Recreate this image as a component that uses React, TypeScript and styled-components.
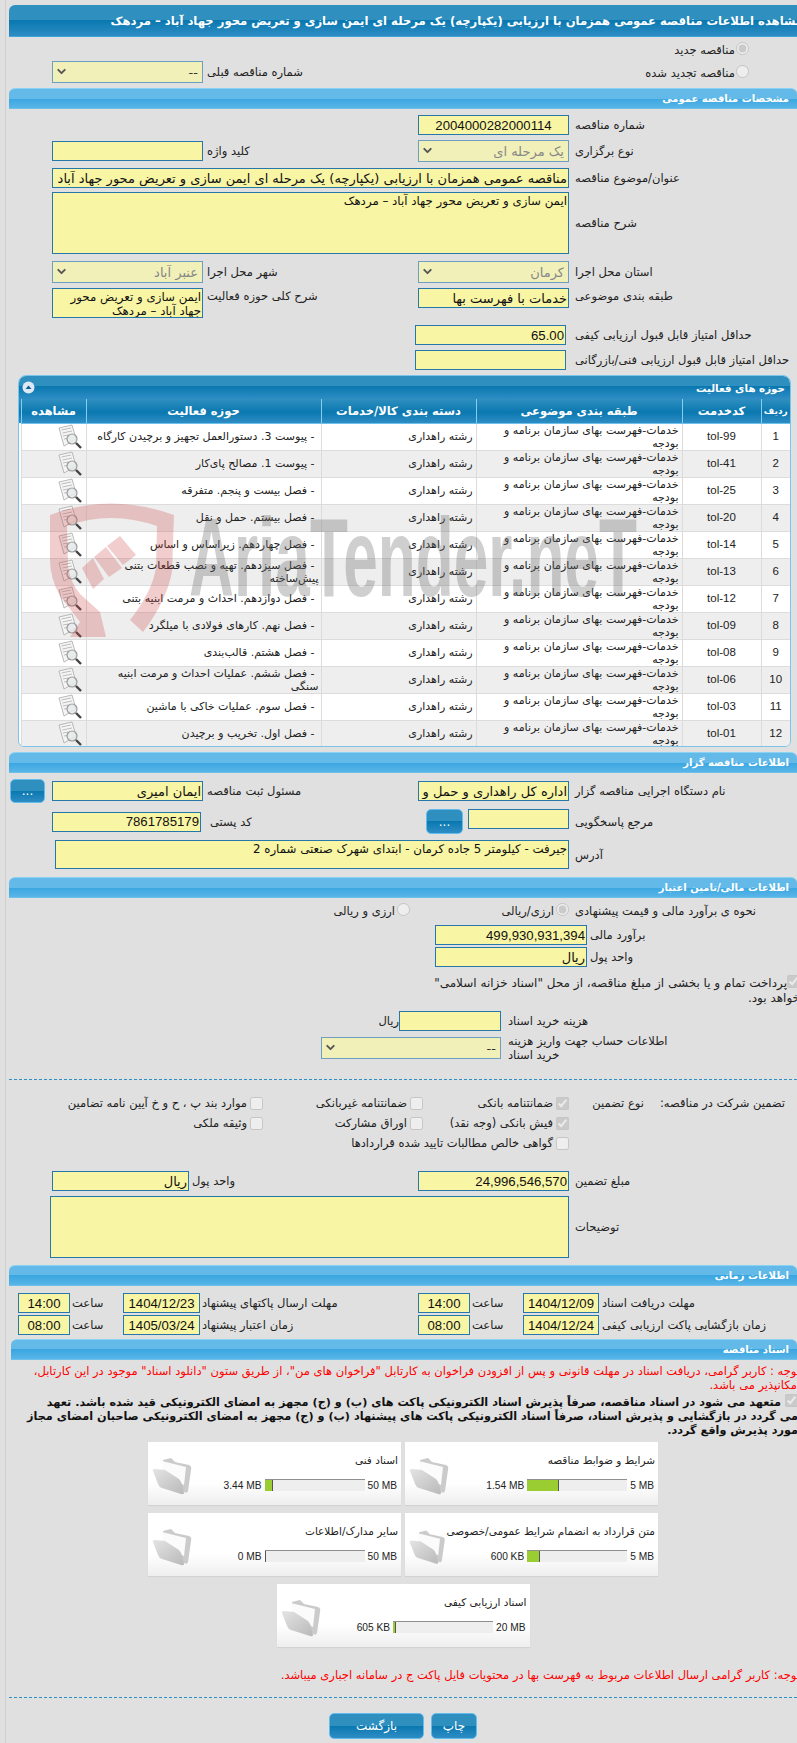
import React from "react";
import styled, { createGlobalStyle, css } from "styled-components";
import { ChevronDown } from "lucide-react";

const GlobalStyle = createGlobalStyle`
  html, body {
    margin: 0;
    padding: 0;
    background: #e0e0e0;
  }
  body {
    font-family: "DejaVu Sans", "Liberation Sans", sans-serif;
    font-size: 11.5px;
    color: #222;
  }
`;

const LATIN = `"Liberation Sans", "DejaVu Sans", sans-serif`;

const Page = styled.div`
  position: relative;
  width: 797px;
  height: 1743px;
  overflow: hidden;
  box-sizing: border-box;
  padding: 5px 0 0 9px;
  background: #e0e0e0;
  &::before {
    content: "";
    position: absolute;
    left: 5px;
    top: 0;
    bottom: 0;
    width: 1px;
    background: #cfcfcf;
  }
`;

const TitleBar = styled.div`
  height: 32px;
  box-sizing: border-box;
  border-radius: 6px 0 0 0;
  border-bottom: 1px solid #41a3dc;
  background: linear-gradient(#2f8fbf 0, #2f8fbf 50%, #0a78b0 50%, #2e8dc4 100%);
  color: #fff;
  font-weight: bold;
  font-size: 11.6px;
  line-height: 32px;
  white-space: nowrap;
  overflow: hidden;
`;

const TitleText = styled.span`
  display: inline-block;
  margin-right: -6px;
`;

const SectionBar = styled.div<{ $top?: number; $inset?: number }>`
  height: 21px;
  box-sizing: border-box;
  margin-top: ${(p) => p.$top ?? 5}px;
  margin-left: ${(p) => p.$inset ?? 0}px;
  padding-right: 8px;
  border-radius: 6px 6px 0 0;
  border-top: 1px solid #8ad2f3;
  border-bottom: 1px solid #6cc0ea;
  background: linear-gradient(#63b9e8 0, #63b9e8 50%, #3aa6e0 50%, #58b5e8 100%);
  color: #fff;
  font-weight: bold;
  font-size: 10px;
  line-height: 19px;
`;

const FormRow = styled.div<{ $cols?: string; $top?: number; $h?: number; $align?: string }>`
  display: grid;
  grid-template-columns: ${(p) => p.$cols ?? "228px 151px 215px 151px 43px"};
  margin-top: ${(p) => p.$top ?? 5}px;
  height: ${(p) => p.$h ?? 20}px;
  align-items: ${(p) => p.$align ?? "center"};
`;

const FieldLabel = styled.label<{ $pad?: number }>`
  display: block;
  text-align: left;
  padding-left: ${(p) => p.$pad ?? 6}px;
  line-height: 14px;
  white-space: nowrap;
`;

const TopLabel = styled(FieldLabel)`
  padding-top: 1px;
`;

const fieldBase = css`
  display: block;
  box-sizing: border-box;
  margin: 0;
  padding: 0 1px;
  background: #f8f5a4;
  border: 1px solid #2678ab;
  color: #111;
  outline: none;
  font-family: "DejaVu Sans", "Liberation Sans", sans-serif;
  font-size: 13px;
`;

const TextField = styled.input<{ $digits?: boolean; $center?: boolean; $shift?: number; $self?: string; $span?: boolean }>`
  ${fieldBase}
  width: 100%;
  height: 20px;
  ${(p) => p.$digits && `font-family: ${LATIN}; font-size: 13.2px;`}
  ${(p) => p.$center && "text-align: center;"}
  ${(p) => p.$shift && `margin-right: ${p.$shift}px;`}
  ${(p) => p.$self && `align-self: ${p.$self};`}
  ${(p) => p.$span && "grid-column: 2 / 5;"}
`;

const TextBox = styled.textarea<{ $h: number; $wide?: boolean; $gap?: number }>`
  ${fieldBase}
  font-size: 11.8px;
  height: ${(p) => p.$h}px;
  width: calc(100% - ${(p) => p.$gap ?? 0}px);
  resize: none;
  overflow: hidden;
  line-height: 14px;
  padding-top: 1px;
  ${(p) => p.$wide && "grid-column: 2 / 5;"}
`;

const SelectWrap = styled.div`
  position: relative;
  width: 100%;
  height: 22px;
`;

const SelectInput = styled.select<{ $muted?: boolean }>`
  ${fieldBase}
  width: 100%;
  height: 22px;
  appearance: none;
  opacity: 1;
  padding-right: 4px;
  background: #f1f0b8;
  border-color: #6e9fc0;
  color: ${(p) => (p.$muted ? "#888" : "#333")};
`;

const SelectArrow = styled(ChevronDown)`
  position: absolute;
  left: 3px;
  top: 4px;
  color: #555;
  pointer-events: none;
`;

const Select = ({ value, muted }: { value: string; muted?: boolean }) => (
  <SelectWrap>
    <SelectInput disabled $muted={muted} value={value} onChange={() => undefined}>
      <option>{value}</option>
    </SelectInput>
    <SelectArrow size={13} strokeWidth={3.5} />
  </SelectWrap>
);

const RadioLabel = styled.div`
  display: flex;
  align-items: center;
  gap: 1px;
  padding: 2px 48px 0 0;
  white-space: nowrap;
`;

const RadioInput = styled.input`
  margin: 0;
  width: 13px;
  height: 13px;
  position: relative;
  top: -2px;
`;

const RadioGroup = styled.div`
  grid-column: 2 / 6;
  display: flex;
  align-items: center;
`;

const RadioOption = styled.span<{ $w?: number }>`
  display: flex;
  align-items: center;
  gap: 2px;
  ${(p) => p.$w && `width: ${p.$w}px;`}
`;

const Panel = styled.div`
  margin: 5px 6px 0 9px;
  box-sizing: border-box;
  height: 372px;
  border: 1px solid #7cc5ea;
  border-radius: 8px 8px 6px 6px;
  background: #fff;
  overflow: hidden;
`;

const PanelHead = styled.div`
  display: flex;
  align-items: center;
  justify-content: space-between;
  height: 23px;
  padding: 0 5px 0 3px;
  background: linear-gradient(#2f8fbf 0, #2f8fbf 45%, #0a78b0 45%, #2e8dc4 100%);
  color: #fff;
  font-weight: bold;
  font-size: 10.3px;
`;

const CollapseDot = styled.svg`
  display: block;
`;

const TableWrap = styled.div`
  padding: 0 0 0 3px;
  background: linear-gradient(#2f8fbf 0, #0a78b0 55%, #2e8dc4 100%) top / 100% 24px no-repeat;
`;

const Grid = styled.table`
  width: 769px;
  table-layout: fixed;
  border-collapse: collapse;
`;

const HeadCell = styled.th<{ $w: number; $size?: number }>`
  width: ${(p) => p.$w}px;
  height: 24px;
  box-sizing: border-box;
  padding: 0;
  border-left: 1px solid #86cdf0;
  border-bottom: 1px solid #6cc0ea;
  color: #fff;
  font-size: ${(p) => p.$size ?? 11.5}px;
  font-weight: bold;
  text-align: center;
  white-space: nowrap;
`;

const GridRow = styled.tr<{ $odd: boolean }>`
  background: ${(p) => (p.$odd ? "#fff" : "#eeeeee")};
`;

const Cell = styled.td<{ $align?: string; $digits?: boolean }>`
  height: 27px;
  box-sizing: border-box;
  padding: 0 3px;
  border-left: 1px solid #dcdcdc;
  border-bottom: 1px solid #dcdcdc;
  line-height: 13px;
  font-size: 11px;
  text-align: ${(p) => p.$align ?? "right"};
  ${(p) => p.$digits && `font-family: ${LATIN}; font-size: 11.5px;`}
`;

const ActivityCell = styled(Cell)`
  padding-right: 2px;
  text-indent: 4px;
  white-space: pre-line;
`;

const Watermark = styled.div`
  position: absolute;
  left: 50px;
  top: 500px;
  width: 610px;
  height: 140px;
  direction: ltr;
  pointer-events: none;
`;

const WatermarkText = styled.span`
  position: absolute;
  left: 139px;
  top: 2px;
  font-family: "Liberation Sans", sans-serif;
  font-weight: bold;
  font-size: 112px;
  line-height: 112px;
  white-space: nowrap;
  color: rgba(105, 105, 105, 0.32);
  transform: scaleX(0.555);
  transform-origin: left top;
`;

const CheckNote = styled.div`
  margin: 8px -3px 0 0;
  font-size: 12px;
  line-height: 15px;
  white-space: nowrap;
`;

const CheckInput = styled.input`
  margin: 0;
  width: 13px;
  height: 13px;
  vertical-align: -1px;
`;

const Dashed = styled.div<{ $top: number }>`
  margin-top: ${(p) => p.$top}px;
  border-top: 1px dashed #2e8fc6;
`;

const GuaranteeGrid = styled.div`
  display: grid;
  grid-template-columns: 228px 146px 160px 1fr;
  grid-auto-rows: 20px;
  margin-top: 13px;
  align-items: center;
`;

const GuaranteeHead = styled.div`
  display: flex;
  padding-right: 12px;
  gap: 16px;
  white-space: nowrap;
`;

const CheckItem = styled.label<{ $col: number; $span?: number }>`
  grid-column: ${(p) => p.$col} / span ${(p) => p.$span ?? 1};
  display: flex;
  align-items: center;
  gap: 3px;
  white-space: nowrap;
`;

const RedNote = styled.div<{ $top: number }>`
  margin: ${(p) => p.$top}px -3px 0 0;
  color: #f00;
  line-height: 14px;
  white-space: nowrap;
`;

const BoldNote = styled.div`
  margin: 2px -1px 0 0;
  color: #111;
  font-weight: bold;
  font-size: 11.25px;
  line-height: 14px;
  white-space: nowrap;
`;

const CardList = styled.div`
  display: flex;
  flex-wrap: wrap;
  justify-content: center;
  gap: 8px 4px;
  width: 510px;
  margin: 4px auto 0;
`;

const Card = styled.div`
  display: flex;
  width: 253px;
  height: 63px;
  box-sizing: border-box;
  padding: 0 3px;
  background: linear-gradient(#fff 0, #fff 65%, #eeeeee 100%);
  box-shadow: 0 1px 1px #d2d2d2;
`;

const CardBody = styled.div`
  flex: 1;
  display: flex;
  flex-direction: column;
`;

const CardTitle = styled.div`
  margin-top: 11px;
  height: 14px;
  line-height: 14px;
  font-size: 10.5px;
  white-space: nowrap;
`;

const Meter = styled.div`
  direction: ltr;
  display: flex;
  justify-content: flex-end;
  align-items: center;
  gap: 3px;
  margin-top: 12px;
  padding-right: 1px;
  font-family: ${LATIN};
  font-size: 10.2px;
  color: #222;
  white-space: nowrap;
`;

const MeterTrack = styled.div`
  width: 100px;
  height: 12px;
  box-sizing: border-box;
  border-top: 1px solid #8f8f8f;
  background: #eeeeee;
`;

const MeterFill = styled.div`
  height: 100%;
  background: #9acd32;
  border-right: 1px solid #555;
  box-sizing: border-box;
`;

const ButtonRow = styled.div`
  display: flex;
  justify-content: center;
  gap: 7px;
  margin-top: 15px;
`;

const ActionButton = styled.button<{ $w: number; $h?: number; $end?: boolean }>`
  width: ${(p) => p.$w}px;
  height: ${(p) => p.$h ?? 26}px;
  box-sizing: border-box;
  padding: 0;
  border: 1px solid #62bcec;
  border-radius: 5px;
  background: linear-gradient(#2f8fbf 0, #2f8fbf 50%, #0a78b0 50%, #2e8dc4 100%);
  color: #fff;
  font-family: "DejaVu Sans", sans-serif;
  font-size: 12px;
  line-height: 1;
  ${(p) => p.$end && "justify-self: end; margin-left: 1px;"}
`;

const FolderGlyph = styled.svg`
  align-self: center;
  margin-top: 4px;
`;

const FolderIcon = () => (
  <FolderGlyph width="42" height="38" viewBox="0 0 42 38">
    <defs>
      <linearGradient id="folderFront" x1="0" y1="0" x2="1" y2="1">
        <stop offset="0" stopColor="#e4e4e4" />
        <stop offset="1" stopColor="#b9b9b9" />
      </linearGradient>
    </defs>
    <path d="M12 3 L20 1 L24 5 L38 8 Q41 9 40 13 L37 34 Q36 37 33 35 L12 22 Z" fill="#cbcbcb" />
    <path d="M11 4 L35 10 L33 28 L13 18 Z" fill="#fbfbfb" />
    <path d="M2 14 Q1 12 4 12 L14 13 L28 22 Q30 24 31 28 L33 36 Q33 38 30 37 L11 31 Q8 30 7 27 Z" fill="url(#folderFront)" />
  </FolderGlyph>
);

const ViewGlyph = styled.svg`
  display: block;
`;

const ViewIcon = () => (
  <ViewGlyph width="26" height="25" viewBox="0 0 26 25">
    <path d="M2 4 L15 1 L19 15 L7 22 Z" fill="#f5f5f5" stroke="#a8a8a8" strokeWidth="0.8" />
    <path d="M4.5 6 L14 4 M5.5 9 L15 7 M6 12 L11 11 M7 15 L10 14.5" stroke="#b5b5b5" strokeWidth="0.9" />
    <circle cx="15" cy="15" r="5" fill="#e6eaea" fillOpacity="0.8" stroke="#9a9a9a" strokeWidth="1.2" />
    <path d="M19 19 L24 24" stroke="#444" strokeWidth="2.4" />
  </ViewGlyph>
);

const LogoGlyph = styled.svg`
  position: absolute;
  left: 0;
  top: 0;
`;

const LogoMark = () => (
  <LogoGlyph width="130" height="140" viewBox="0 0 130 140">
    <g fill="rgba(205, 70, 70, 0.27)">
      <path d="M0 15 Q60 -8 124 15 L122 72 Q116 102 93 132 L80 120 Q102 92 106 68 L107 26 Q60 10 17 26 L18 66 Q20 82 30 94 L50 112 L56 137 L20 137 L30 122 L10 96 Q0 78 0 60 Z" />
      <path d="M57 46 L70 36 L86 55 L73 65 Z" />
      <path d="M44 57 L56 47 L72 68 L59 77 Z" />
      <path d="M32 68 L43 58 L54 79 L43 89 Z" />
    </g>
  </LogoGlyph>
);

const services = [
  ["tol-99", "- پیوست 3. دستورالعمل تجهیز و برچیدن کارگاه"],
  ["tol-41", "- پیوست 1. مصالح پای‌کار"],
  ["tol-25", "- فصل بیست و پنجم. متفرقه"],
  ["tol-20", "- فصل بیستم. حمل و نقل"],
  ["tol-14", "- فصل چهاردهم. زیراساس و اساس"],
  ["tol-13", "- فصل سیزدهم. تهیه و نصب قطعات بتنی\nپیش‌ساخته"],
  ["tol-12", "- فصل دوازدهم. احداث و مرمت ابنیه بتنی"],
  ["tol-09", "- فصل نهم. کارهای فولادی با میلگرد"],
  ["tol-08", "- فصل هشتم. قالب‌بندی"],
  ["tol-06", "- فصل ششم. عملیات احداث و مرمت ابنیه\nسنگی"],
  ["tol-03", "- فصل سوم. عملیات خاکی با ماشین"],
  ["tol-01", "- فصل اول. تخریب و برچیدن"],
];

const documents = [
  { title: "شرایط و ضوابط مناقصه", used: "1.54 MB", limit: "5 MB", fill: 32 },
  { title: "اسناد فنی", used: "3.44 MB", limit: "50 MB", fill: 8 },
  { title: "متن قرارداد به انضمام شرایط عمومی/خصوصی", used: "600 KB", limit: "5 MB", fill: 13 },
  { title: "سایر مدارک/اطلاعات", used: "0 MB", limit: "50 MB", fill: 1 },
  { title: "اسناد ارزیابی کیفی", used: "605 KB", limit: "20 MB", fill: 3 },
];

const TIME_COLS = "198px 76px 53px 52px 218px 77px 53px 52px 9px";

const App = () => {
  return (
    <Page dir="rtl">
      <GlobalStyle />
      <TitleBar>
        <TitleText>
          مشاهده اطلاعات مناقصه عمومی همزمان با ارزیابی (یکپارچه) یک مرحله ای ایمن سازی و تعریض محور جهاد آباد – مردهک
        </TitleText>
      </TitleBar>

      <FormRow $top={0} $h={24}>
        <RadioLabel>
          <RadioInput type="radio" disabled checked readOnly />
          مناقصه جدید
        </RadioLabel>
      </FormRow>
      <FormRow $top={0} $h={22}>
        <RadioLabel>
          <RadioInput type="radio" disabled />
          مناقصه تجدید شده
        </RadioLabel>
        <span />
        <FieldLabel $pad={4}>شماره مناقصه قبلی</FieldLabel>
        <Select value="--" />
      </FormRow>

      <SectionBar>مشخصات مناقصه عمومی</SectionBar>
      <FormRow $top={6}>
        <FieldLabel>شماره مناقصه</FieldLabel>
        <TextField $digits $center readOnly value="2004000282000114" />
      </FormRow>
      <FormRow $h={22}>
        <FieldLabel>نوع برگزاری</FieldLabel>
        <Select value="یک مرحله ای" muted />
        <FieldLabel $pad={4}>کلید واژه</FieldLabel>
        <TextField readOnly value="" />
      </FormRow>
      <FormRow $top={6}>
        <FieldLabel>عنوان/موضوع مناقصه</FieldLabel>
        <TextField
          $span
          readOnly
          value="مناقصه عمومی همزمان با ارزیابی (یکپارچه) یک مرحله ای ایمن سازی و تعریض محور جهاد آباد – مردهک"
        />
      </FormRow>
      <FormRow $top={4} $h={62}>
        <FieldLabel>شرح مناقصه</FieldLabel>
        <TextBox $h={62} $wide readOnly value="ایمن سازی و تعریض محور جهاد آباد – مردهک" />
      </FormRow>
      <FormRow $top={7} $h={22}>
        <FieldLabel>استان محل اجرا</FieldLabel>
        <Select value="کرمان" muted />
        <FieldLabel $pad={4}>شهر محل اجرا</FieldLabel>
        <Select value="عنبر آباد" muted />
      </FormRow>
      <FormRow $h={30} $align="start">
        <TopLabel>طبقه بندی موضوعی</TopLabel>
        <TextField readOnly value="خدمات با فهرست بها" />
        <TopLabel $pad={4}>شرح کلی حوزه فعالیت</TopLabel>
        <TextBox $h={30} readOnly value="ایمن سازی و تعریض محور جهاد آباد – مردهک" />
      </FormRow>
      <FormRow $top={7}>
        <FieldLabel>حداقل امتیاز قابل قبول ارزیابی کیفی</FieldLabel>
        <TextField $digits $shift={3} readOnly value="65.00" />
      </FormRow>
      <FormRow>
        <FieldLabel>حداقل امتیاز قابل قبول ارزیابی فنی/بازرگانی</FieldLabel>
        <TextField $shift={3} readOnly value="" />
      </FormRow>

      <Panel>
        <PanelHead>
          <span>حوزه های فعالیت</span>
          <CollapseDot width="13" height="13" viewBox="0 0 13 13">
            <circle cx="6.5" cy="6.5" r="6" fill="#dfe9f5" />
            <path d="M3.5 8 L6.5 4.5 L9.5 8 Z" fill="#0f5f96" />
          </CollapseDot>
        </PanelHead>
        <TableWrap>
          <Grid>
            <thead>
              <tr>
                <HeadCell $w={29} $size={9}>ردیف</HeadCell>
                <HeadCell $w={79}>کدخدمت</HeadCell>
                <HeadCell $w={206}>طبقه بندی موضوعی</HeadCell>
                <HeadCell $w={155}>دسته بندی کالا/خدمات</HeadCell>
                <HeadCell $w={235}>حوزه فعالیت</HeadCell>
                <HeadCell $w={65}>مشاهده</HeadCell>
              </tr>
            </thead>
            <tbody>
              {services.map(([code, activity], i) => (
                <GridRow key={code} $odd={i % 2 === 0}>
                  <Cell $align="center" $digits>{i + 1}</Cell>
                  <Cell $align="center" $digits>{code}</Cell>
                  <Cell>خدمات-فهرست بهای سازمان برنامه و بودجه</Cell>
                  <Cell>رشته راهداری</Cell>
                  <ActivityCell>{activity}</ActivityCell>
                  <Cell><ViewIcon /></Cell>
                </GridRow>
              ))}
            </tbody>
          </Grid>
        </TableWrap>
      </Panel>
      <Watermark>
        <LogoMark />
        <WatermarkText>AriaTender.neT</WatermarkText>
      </Watermark>

      <SectionBar>اطلاعات مناقصه گزار</SectionBar>
      <FormRow $top={6} $h={24}>
        <FieldLabel>نام دستگاه اجرایی مناقصه گزار</FieldLabel>
        <TextField readOnly value="اداره کل راهداری و حمل و نقل جاده ای جنوب کرمان" />
        <FieldLabel $pad={4}>مسئول ثبت مناقصه</FieldLabel>
        <TextField readOnly value="ایمان امیری" />
        <ActionButton $w={35} $h={24} $end>...</ActionButton>
      </FormRow>
      <FormRow $top={6} $h={25} $cols="228px 101px 5px 37px 225px 149px 43px">
        <FieldLabel>مرجع پاسخگویی</FieldLabel>
        <TextField $self="start" readOnly value="" />
        <span />
        <ActionButton $w={37} $h={25}>...</ActionButton>
        <FieldLabel $pad={9}>کد پستی</FieldLabel>
        <TextField $digits readOnly value="7861785179" />
      </FormRow>
      <FormRow $top={6} $h={29}>
        <FieldLabel>آدرس</FieldLabel>
        <TextBox $h={29} $wide $gap={3} readOnly value="جیرفت - کیلومتر 5 جاده کرمان - ابتدای شهرک صنعتی شماره 2" />
      </FormRow>

      <SectionBar $top={8}>اطلاعات مالی/تامین اعتبار</SectionBar>
      <FormRow $top={3}>
        <FieldLabel>نحوه ی برآورد مالی و قیمت پیشنهادی</FieldLabel>
        <RadioGroup>
          <RadioOption $w={159}>
            <RadioInput type="radio" disabled checked readOnly />
            ارزی/ریالی
          </RadioOption>
          <RadioOption>
            <RadioInput type="radio" disabled />
            ارزی و ریالی
          </RadioOption>
        </RadioGroup>
      </FormRow>
      <FormRow $top={4} $cols="210px 152px 1fr">
        <FieldLabel $pad={3}>برآورد مالی</FieldLabel>
        <TextField $digits readOnly value="499,930,931,394" />
      </FormRow>
      <FormRow $top={2} $cols="210px 152px 1fr">
        <FieldLabel $pad={3}>واحد پول</FieldLabel>
        <TextField readOnly value="ریال" />
      </FormRow>
      <CheckNote>
        <CheckInput type="checkbox" disabled checked readOnly />
        پرداخت تمام و یا بخشی از مبلغ مناقصه، از محل "اسناد خزانه اسلامی"
        <br />
        خواهد بود.
      </CheckNote>
      <FormRow $cols="296px 102px 1fr">
        <FieldLabel $pad={7}>هزینه خرید اسناد</FieldLabel>
        <TextField readOnly value="" />
        <span>ریال</span>
      </FormRow>
      <FormRow $top={3} $h={28} $cols="296px 180px 1fr">
        <FieldLabel $pad={7}>
          اطلاعات حساب جهت واریز هزینه
          <br />
          خرید اسناد
        </FieldLabel>
        <Select value="--" />
      </FormRow>
      <Dashed $top={17} />

      <GuaranteeGrid>
        <GuaranteeHead>
          <span>تضمین شرکت در مناقصه:</span>
          <span>نوع تضمین</span>
        </GuaranteeHead>
        <CheckItem $col={2}>
          <CheckInput type="checkbox" disabled checked readOnly />
          ضمانتنامه بانکی
        </CheckItem>
        <CheckItem $col={3}>
          <CheckInput type="checkbox" disabled />
          ضمانتنامه غیربانکی
        </CheckItem>
        <CheckItem $col={4}>
          <CheckInput type="checkbox" disabled />
          موارد بند پ ، ح و خ آیین نامه تضامین
        </CheckItem>
        <CheckItem $col={2}>
          <CheckInput type="checkbox" disabled checked readOnly />
          فیش بانکی (وجه نقد)
        </CheckItem>
        <CheckItem $col={3}>
          <CheckInput type="checkbox" disabled />
          اوراق مشارکت
        </CheckItem>
        <CheckItem $col={4}>
          <CheckInput type="checkbox" disabled />
          وثیقه ملکی
        </CheckItem>
        <CheckItem $col={2} $span={3}>
          <CheckInput type="checkbox" disabled />
          گواهی خالص مطالبات تایید شده قراردادها
        </CheckItem>
      </GuaranteeGrid>

      <FormRow $top={18} $cols="228px 151px 229px 137px 43px">
        <FieldLabel>مبلغ تضمین</FieldLabel>
        <TextField $digits readOnly value="24,996,546,570" />
        <FieldLabel $pad={3}>واحد پول</FieldLabel>
        <TextField readOnly value="ریال" />
      </FormRow>
      <FormRow $h={62}>
        <FieldLabel>توضیحات</FieldLabel>
        <TextBox $h={62} $wide $gap={-2} readOnly value="" />
      </FormRow>

      <SectionBar $top={7}>اطلاعات زمانی</SectionBar>
      <FormRow $top={7} $cols={TIME_COLS}>
        <FieldLabel $pad={3}>مهلت دریافت اسناد</FieldLabel>
        <TextField $digits $center readOnly value="1404/12/09" />
        <FieldLabel $pad={2}>ساعت</FieldLabel>
        <TextField $digits $center readOnly value="14:00" />
        <FieldLabel $pad={2}>مهلت ارسال پاکتهای پیشنهاد</FieldLabel>
        <TextField $digits $center readOnly value="1404/12/23" />
        <FieldLabel $pad={2}>ساعت</FieldLabel>
        <TextField $digits $center readOnly value="14:00" />
      </FormRow>
      <FormRow $top={2} $cols={TIME_COLS}>
        <FieldLabel $pad={3}>زمان بازگشایی پاکت ارزیابی کیفی</FieldLabel>
        <TextField $digits $center readOnly value="1404/12/24" />
        <FieldLabel $pad={2}>ساعت</FieldLabel>
        <TextField $digits $center readOnly value="08:00" />
        <FieldLabel $pad={2}>زمان اعتبار پیشنهاد</FieldLabel>
        <TextField $digits $center readOnly value="1405/03/24" />
        <FieldLabel $pad={2}>ساعت</FieldLabel>
        <TextField $digits $center readOnly value="08:00" />
      </FormRow>

      <SectionBar $top={4} $inset={2}>اسناد مناقصه</SectionBar>
      <RedNote $top={4}>
        توجه : کاربر گرامی، دریافت اسناد در مهلت قانونی و پس از افزودن فراخوان به کارتابل "فراخوان های من"، از طریق ستون "دانلود اسناد" موجود در این کارتابل،
        <br />
        امکانپذیر می باشد.
      </RedNote>
      <BoldNote>
        <CheckInput type="checkbox" disabled checked readOnly /> متعهد می شود در اسناد مناقصه، صرفاً پذیرش اسناد الکترونیکی پاکت های (ب) و (ج) مجهز به امضای الکترونیکی قید شده باشد. تعهد
        <br />
        می گردد در بازگشایی و پذیرش اسناد، صرفاً اسناد الکترونیکی پاکت های پیشنهاد (ب) و (ج) مجهز به امضای الکترونیکی صاحبان امضای مجاز
        <br />
        مورد پذیرش واقع گردد.
      </BoldNote>

      <CardList>
        {documents.map((doc) => (
          <Card key={doc.title}>
            <CardBody>
              <CardTitle>{doc.title}</CardTitle>
              <Meter>
                <span>{doc.used}</span>
                <MeterTrack>
                  <MeterFill style={{ width: doc.fill }} />
                </MeterTrack>
                <span>{doc.limit}</span>
              </Meter>
            </CardBody>
            <FolderIcon />
          </Card>
        ))}
      </CardList>

      <RedNote $top={21}>توجه: کاربر گرامی ارسال اطلاعات مربوط به فهرست بها در محتویات فایل پاکت ج در سامانه اجباری میباشد.</RedNote>
      <Dashed $top={15} />
      <ButtonRow>
        <ActionButton $w={46}>چاپ</ActionButton>
        <ActionButton $w={95}>بازگشت</ActionButton>
      </ButtonRow>
    </Page>
  );
};

export default App;
